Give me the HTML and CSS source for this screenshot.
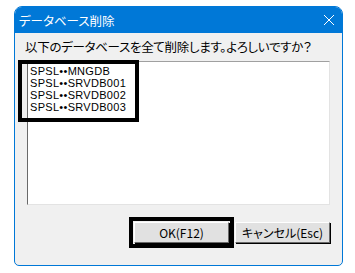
FILE: index.html
```html
<!DOCTYPE html>
<html lang="ja">

<head>
    <meta charset="UTF-8">
    <meta name="viewport" content="width=device-width, initial-scale=1.0">
    <title>データベース削除</title>
    <link rel="stylesheet" href="styles.css">
</head>

<body>
    <div class="dialog">
        <div class="title-bar">
            <div class="title">データベース削除</div>
            <div class="close">
                <svg width="12" height="12" viewBox="0 0 12 12">
                    <path d="M1 1 L11 11 M11 1 L1 11" stroke="#fff" stroke-width="1" fill="none" />
                </svg>
            </div>
        </div>
        <div class="content">
            <div class="message">以下のデータベースを全て削除します。よろしいですか？</div>
            <div class="list-box">
                <ul class="db-list">
                    <li>SPSL••MNGDB</li>
                    <li>SPSL••SRVDB001</li>
                    <li>SPSL••SRVDB002</li>
                    <li>SPSL••SRVDB003</li>
                </ul>
                <div class="mark mark-list"></div>
            </div>
            <div class="buttons">
                <div class="btn btn-ok">OK(F12)</div>
                <div class="btn">キャンセル(Esc)</div>
            </div>
        </div>
    </div>
</body>

</html>
```

FILE: styles.css
```css
* {
    margin: 0;
    padding: 0;
    box-sizing: border-box;
}

body {
    background-color: #fff;
    font-family: "Noto Sans CJK JP", "Liberation Sans", sans-serif;
}

.dialog {
    margin: 6px 0 0 14px;
    width: 329px;
    height: 260px;
    border: 1px solid #0078d7;
    border-radius: 8px 8px 5px 5px;
    background-color: #f0f0f0;
    overflow: hidden;
    display: flex;
    flex-direction: column;
}

.title-bar {
    height: 26px;
    background-color: #0078d7;
    display: flex;
    align-items: center;
    justify-content: space-between;
    padding: 0 7px 0 4px;
    color: #fff;
}

.title {
    font-size: 12.5px;
    font-feature-settings: "palt";
}

.close {
    display: flex;
    width: 12px;
    height: 12px;
}

.content {
    flex: 1;
    display: flex;
    flex-direction: column;
    padding: 5px 12px 0 10px;
}

.message {
    font-size: 12.5px;
    letter-spacing: -0.3px;
    font-feature-settings: "palt";
    color: #000;
    height: 23px;
    line-height: 18px;
}

.list-box {
    position: relative;
    margin-left: 2px;
    height: 144px;
    background-color: #fff;
    border-top: 1px solid #a0a0a0;
    border-left: 1px solid #696969;
    border-right: 1px solid #e3e3e3;
    border-bottom: 1px solid #e3e3e3;
    padding: 3px 0 0 2px;
}

.db-list {
    list-style: none;
    font-family: "Liberation Sans", sans-serif;
    font-size: 11px;
    letter-spacing: 0.3px;
    line-height: 12px;
    color: #000;
}

.mark {
    position: absolute;
    border: 4px solid #000;
}

.mark-list {
    left: -10px;
    top: -2px;
    width: 121px;
    height: 62px;
}

.buttons {
    display: flex;
    justify-content: flex-end;
    gap: 6px;
    margin-top: 17px;
}

.btn {
    width: 95px;
    height: 21px;
    line-height: 19px;
    text-align: center;
    font-size: 12px;
    font-feature-settings: "palt";
    background-color: #e1e1e1;
    border-top: 1px solid #fff;
    border-left: 1px solid #fff;
    border-right: 1px solid #696969;
    border-bottom: 1px solid #696969;
    box-shadow: 1px 1px 0 #000;
    color: #000;
}

.btn-ok {
    outline: 4px solid #000;
    outline-offset: 1px;
}
```
